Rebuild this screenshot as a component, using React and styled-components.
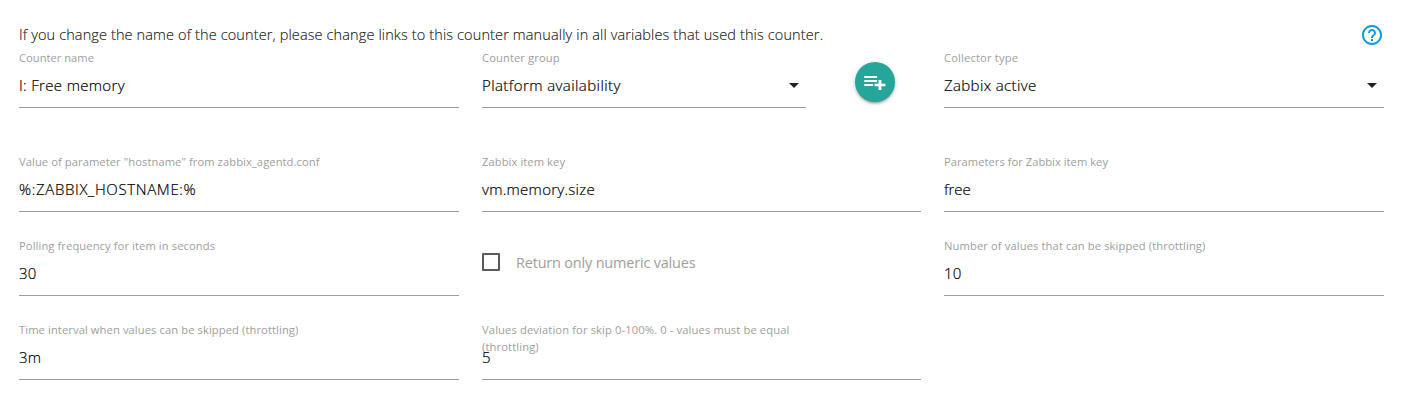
import React from 'react';
import styled, { createGlobalStyle } from 'styled-components';

const Global = createGlobalStyle`
  *{box-sizing:border-box}
  body{margin:0;background:#fff;font-family:"Open Sans","Noto Sans",sans-serif;color:rgba(0,0,0,.87)}
`;
const Page = styled.main`width:1408px;height:402px;padding:24px 24px 0 19px;overflow:hidden;`;
const Notice = styled.div`
  display:flex;justify-content:space-between;height:24px;
  font-size:14.5px;font-weight:300;line-height:21px;white-space:nowrap;-webkit-text-stroke:.2px;
`;
const Help = styled.svg`width:24px;height:24px;margin-top:-1px;fill:#039be5;`;
const Row = styled.div`
  display:grid;grid-template-columns:440px 439px 440px;column-gap:23px;height:${p => p.$h}px;
`;
const Split = styled.div`display:flex;gap:49px;`;
const Field = styled.div`
  position:relative;width:${p => p.$w || '100%'};height:60px;border-bottom:1px solid #9e9e9e;
`;
const Label = styled.label`
  display:block;height:18px;padding-top:1px;font-size:11.2px;line-height:17px;color:#9e9e9e;
`;
const Text = styled.span`
  display:inline-block;white-space:nowrap;letter-spacing:${p => p.$ls || 0}px;
`;
const Value = styled.div`
  height:41px;font-size:15px;font-weight:300;line-height:39px;white-space:nowrap;color:#000;-webkit-text-stroke:.2px;
`;
const Caret = styled.span`
  position:absolute;right:7px;top:35px;border:5px solid transparent;border-top-color:#212121;border-bottom:0;
`;
const AddButton = styled.button`
  width:40px;height:40px;margin-top:14px;padding:8px;border:0;border-radius:50%;background:#26a69a;
  box-shadow:0 2px 2px 0 rgba(0,0,0,.14),0 3px 1px -2px rgba(0,0,0,.12),0 1px 5px 0 rgba(0,0,0,.2);
  svg{display:block;width:24px;height:24px;fill:#fff}
`;
const Check = styled.label`display:flex;align-items:center;gap:16px;height:48px;margin-top:2px;color:#9e9e9e;font-size:14.5px;`;
const Box = styled.span`width:18px;height:18px;border:2px solid #5a5a5a;border-radius:1px;`;

function Input({ label, value, w, select, ls = 0.1, labelLs = 0.07 }) {
  return (
    <Field $w={w}>
      <Label>{[].concat(label).map(l => <div key={l}><Text $ls={labelLs}>{l}</Text></div>)}</Label>
      <Value><Text $ls={ls}>{value}</Text></Value>
      {select && <Caret />}
    </Field>
  );
}

export default function App() {
  return (
    <Page>
      <Global />
      <Notice>
        <Text $ls={0.125}>If you change the name of the counter, please change links to this counter manually in all variables that used this counter.</Text>
        <Help viewBox="0 0 24 24"><path d="M11 18h2v-2h-2v2zm1-16C6.48 2 2 6.48 2 12s4.480 10 10 10 10-4.480 10-10S17.520 2 12 2zm0 18c-4.410 0-8-3.590-8-8s3.590-8 8-8 8 3.590 8 8-3.590 8-8 8zm0-14c-2.210 0-4 1.790-4 4h2c0-1.100.9-2 2-2s2 .9 2 2c0 2-3 1.750-3 5h2c0-2.250 3-2.500 3-5 0-2.210-1.790-4-4-4z" /></Help>
      </Notice>
      <Row $h={104}>
        <Input label="Counter name" value="I: Free memory" ls={0.33} labelLs={0} />
        <Split>
          <Input label="Counter group" value="Platform availability" w="324px" select ls={0.42} labelLs={0.1} />
          <AddButton aria-label="Add group"><svg viewBox="0 0 24 24"><path d="M1.300 6H14v2H1.300zM1.300 10H14v2H1.300zM1.300 14H10v2H1.300zM15.500 10h2.900v3.800h4v2.400h-4v3.800h-2.900v-3.800h-4v-2.400h4z" /></svg></AddButton>
        </Split>
        <Input label="Collector type" value="Zabbix active" select ls={0.37} labelLs={0.15} />
      </Row>
      <Row $h={84}>
        <Input label={'Value of parameter "hostname" from zabbix_agentd.conf'} value="%:ZABBIX_HOSTNAME:%" ls={0.64} />
        <Input label="Zabbix item key" value="vm.memory.size" ls={0.28} />
        <Input label="Parameters for Zabbix item key" value="free" ls={0} labelLs={0.02} />
      </Row>
      <Row $h={84}>
        <Input label="Polling frequency for item in seconds" value="30" labelLs={0.09} />
        <Check><Box /><Text $ls={-0.2}>Return only numeric values</Text></Check>
        <Input label="Number of values that can be skipped (throttling)" value="10" labelLs={0.11} />
      </Row>
      <Row $h={84}>
        <Input label="Time interval when values can be skipped (throttling)" value="3m" ls={0.3} labelLs={0.09} />
        <Input label={['Values deviation for skip 0-100%. 0 - values must be equal', '(throttling)']} value="5" labelLs={0.12} />
      </Row>
    </Page>
  );
}
